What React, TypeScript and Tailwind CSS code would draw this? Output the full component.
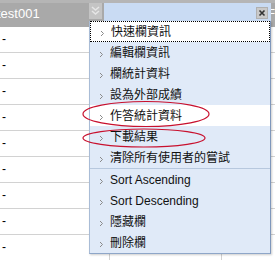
import React from "react";

const items1 = ["快速欄資訊", "編輯欄資訊", "欄統計資料", "設為外部成績", "作答統計資料", "下載結果", "清除所有使用者的嘗試"];
const items2 = ["Sort Ascending", "Sort Descending", "隱藏欄", "刪除欄"];

function Chevron() {
  return (
    <svg width="5" height="7" viewBox="0 0 5 7" className="mt-[4px] shrink-0">
      <path d="M1 1 L3.5 3.5 L1 6" fill="none" stroke="#8a8a8a" strokeWidth="1" />
    </svg>
  );
}

function Item({ label, focused, active }: { label: string; focused?: boolean; active?: boolean }) {
  return (
    <div
      className={
        "flex h-[21px] items-center gap-[6px] pl-[9px] text-[12px] leading-none text-[#111] " +
        (focused ? "bg-white border border-dotted border-black " : active ? "bg-white " : "")
      }
    >
      <Chevron />
      <span>{label}</span>
    </div>
  );
}

export default function App() {
  const rows = Array.from({ length: 9 });
  return (
    <div
      className="relative w-[275px] h-[260px] overflow-hidden bg-white"
      style={{ fontFamily: '"Liberation Sans", "Noto Sans CJK TC", sans-serif' }}
    >
      {/* header */}
      <div className="flex h-[27px] border-t-[3px] border-[#b5b5b5] bg-[#a9a9a9]">
        <div className="w-[90px] overflow-hidden text-white text-[13px] leading-[22px] pl-0">
          <span className="ml-[-3px]">test001</span>
        </div>
        <div className="w-[14px] h-[16px] bg-[#c4c4c4] flex items-center justify-center">
          <svg width="9" height="10" viewBox="0 0 9 10">
            <path d="M1 1 L4.5 4 L8 1 M1 5 L4.5 8 L8 5" fill="none" stroke="#e6e6e6" strokeWidth="1.5" />
          </svg>
        </div>
        <div className="w-[118px] border-r border-[#c8c8c8]" />
        <div className="flex-1 text-white text-[12px] leading-[22px] pl-[49px]">F</div>
      </div>
      {/* rows */}
      {rows.map((_, i) => (
        <div key={i} className="flex h-[26px] border-b border-[#d2d2d2]">
          <div className="w-[110px] border-r border-[#d2d2d2] text-[12px] leading-[25px] pl-[2px] text-black">-</div>
          <div className="w-[112px] border-r border-[#d2d2d2]" />
          <div className="flex-1" />
        </div>
      ))}

      {/* menu top bar */}
      <div className="absolute left-[104px] top-[3px] w-[167px] h-[18px] bg-[#c9dbf3] flex justify-end items-start pr-[3px] pt-[4px]">
        <div className="w-[12px] h-[12px] bg-[#c9c9c9] border border-[#b0b0b0] flex items-center justify-center">
          <svg width="8" height="8" viewBox="0 0 8 8">
            <path d="M1.5 1.5 L6.5 6.5 M6.5 1.5 L1.5 6.5" stroke="#333" strokeWidth="1.6" />
          </svg>
        </div>
      </div>

      {/* menu body */}
      <div className="absolute left-[89px] top-[21px] w-[182px] bg-[#e0eaf8] border-l border-[#a9bcd6] border-r border-r-[#7f97bb] border-b border-b-[#8ea6c8] shadow-[1px_1px_2px_rgba(0,0,0,0.2)]">
        {items1.map((t, i) => (
          <Item key={t} label={t} focused={i === 0} active={i === 4} />
        ))}
        <div className="h-px bg-[#b7c8de]" />
        {items2.map((t) => (
          <Item key={t} label={t} />
        ))}
      </div>

      {/* red ellipses */}
      <svg className="absolute left-0 top-0 pointer-events-none" width="275" height="260">
        <ellipse cx="146" cy="114" rx="63" ry="12.5" fill="none" stroke="#c8102e" strokeWidth="1.2" />
        <ellipse cx="144" cy="138" rx="61" ry="9" fill="none" stroke="#c8102e" strokeWidth="1.2" />
      </svg>
    </div>
  );
}
